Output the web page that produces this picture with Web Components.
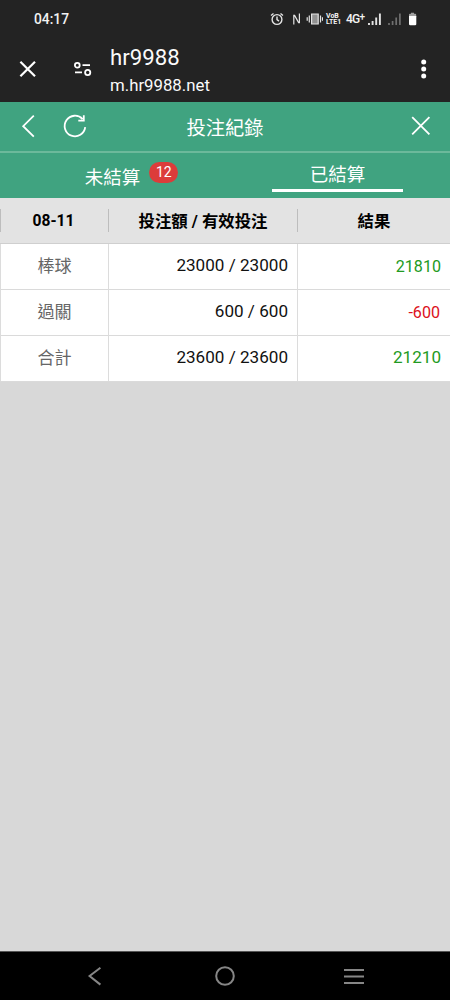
<!DOCTYPE html>
<html lang="zh-Hant">
<head>
<meta charset="utf-8">
<meta name="viewport" content="width=device-width, initial-scale=1">
<title>投注紀錄</title>
<style>
  body {
    margin: 0;
    font-family: Roboto, "Noto Sans CJK TC", sans-serif;
  }
</style>
</head>
<body>
<phone-screen>
  <status-bar slot="top" time="04:17"></status-bar>
  <browser-bar slot="top" name="hr9988" url="m.hr9988.net"></browser-bar>
  <app-header>投注紀錄</app-header>
  <tab-bar>
    <tab-item count="12">未結算</tab-item>
    <tab-item active>已結算</tab-item>
  </tab-bar>
  <bet-table>
    <bet-row head><span>08-11</span><span slot="amount">投注額 / 有效投注</span><span slot="result">結果</span></bet-row>
    <bet-row result="21810"><span>棒球</span><span slot="amount">23000 / 23000</span></bet-row>
    <bet-row result="-600"><span>過關</span><span slot="amount">600 / 600</span></bet-row>
    <bet-row result="21210" total><span>合計</span><span slot="amount">23600 / 23600</span></bet-row>
  </bet-table>
  <nav-bar slot="bottom"></nav-bar>
</phone-screen>

<script>
// shared base: clones the class's template into an open shadow root
class BaseElement extends HTMLElement {
  constructor() {
    super()
    this.attachShadow({ mode: 'open' })
    const template = document.createElement('template')
    template.innerHTML = this.constructor.markup
    this.shadowRoot.appendChild(template.content.cloneNode(true))
  }

  element(id) { return this.shadowRoot.getElementById(id) }
}

class PhoneScreen extends BaseElement {
  static markup = `
    <style>
      :host {
        display: flex;
        flex-direction: column;
        height: 1000px;
        overflow: hidden;
        background: #d8d8d8;
      }
      main { flex: 1; }
    </style>
    <slot name="top"></slot>
    <main><slot></slot></main>
    <slot name="bottom"></slot>
  `
}

class StatusBar extends BaseElement {
  static markup = `
    <style>
      :host {
        display: flex;
        justify-content: space-between;
        align-items: center;
        box-sizing: border-box;
        height: 37px;
        padding: 0 33px 0 34px;
        background: #232323;
        color: #f2f2f2;
      }
      #time { font-size: 13.8px; font-weight: 500; line-height: 18px; padding-top: 1px; }
      #icons { display: flex; align-items: center; }
      svg { display: block; fill: none; stroke: #e4e4e4; }
      .volte {
        display: grid;
        font-size: 7px;
        line-height: 6px;
        font-weight: 700;
        width: 16px;
        margin: 0 4px 0 3px;
        white-space: nowrap;
      }
      .net { font-size: 12px; font-weight: 500; width: 22px; line-height: 14px; white-space: nowrap; display: flex; letter-spacing: -.7px; }
      .net sup { font-size: 10px; line-height: 10px; vertical-align: top; }
    </style>
    <span id="time"></span>
    <div id="icons">
      <svg width="14" height="14" viewBox="0 0 14 14" stroke-width="1.4"><circle cx="7" cy="7.5" r="4.9"/><path d="M7 4.6v3l2 1.5M1 3.5l2.5-2M13 3.5l-2.5-2"/></svg>
      <svg width="22" height="14" viewBox="0 0 22 14" stroke-width="1.2"><path d="M9.8 12.6V3.4h.8l4 7.2h.8V1.6"/></svg>
      <svg width="17" height="14" viewBox="0 0 17 14" stroke-width="1.2"><path fill="#929292" d="M5.6 2h6.6v10H5.6z"/><path d="M3.3 3.6v6.8M1.2 5.3v3.4M14.5 3.6v6.8M16.5 5.3v3.4"/></svg>
      <div class="volte"><span>VoB</span><span>LTE1</span></div>
      <div class="net"><span>4G</span><sup>+</sup></div>
      <svg width="14" height="14" viewBox="0 0 14 14" stroke="#fff" stroke-width="1.9"><path d="M1 11v2M4.6 9v4M8.2 5.5V13M11.9 1.5V13"/></svg>
      <svg width="20" height="14" viewBox="0 0 20 14" style="stroke:#707070" stroke-width="1.7"><path d="M7 11v2M10.6 9v4M14.2 5.5V13M17.9 1.5V13"/></svg>
      <svg width="15" height="14" viewBox="0 0 15 14" style="stroke:none"><path fill="#a0a0a0" d="M9 .7h3v1.1h1.2q1 0 1 1V5H7V2.8q0-1 1-1h1z"/><path fill="#fff" d="M7 4h7.3v8q0 1.2-1.2 1.2H8.2Q7 13.2 7 12z"/></svg>
    </div>
  `

  connectedCallback() {
    this.element('time').textContent = this.getAttribute('time')
  }
}

class BrowserBar extends BaseElement {
  static markup = `
    <style>
      :host {
        display: flex;
        align-items: center;
        box-sizing: border-box;
        height: 65px;
        padding: 0 20px 0 18px;
        background: #232323;
        color: #fafafa;
      }
      svg { display: block; fill: none; stroke: #fff; margin-bottom: 2px; }
      .site { margin: 0 16px 2px 36px; }
      .title { flex: 1; display: flex; flex-direction: column; }
      #name { font-size: 22.2px; line-height: 27px; }
      #url { font-size: 16.8px; line-height: 22px; padding-top: 3px; }
    </style>
    <svg width="20" height="20" viewBox="0 0 20 20" stroke-width="2.2"><path d="m2.4 2.7 14.6 14.6m0-14.6L2.4 17.3"/></svg>
    <svg class="site" width="20" height="20" viewBox="0 0 20 20" stroke-width="1.8"><circle cx="3.3" cy="6.2" r="2.4"/><path d="M8.5 6.2H16M1 13.3h7"/><circle cx="13.7" cy="13.5" r="2.6"/></svg>
    <div class="title"><span id="name"></span><span id="url"></span></div>
    <svg width="13" height="22" viewBox="0 0 13 22" style="fill:#fff;stroke:none"><circle cx="6.7" cy="4" r="2.5"/><circle cx="6.7" cy="11" r="2.5"/><circle cx="6.7" cy="18" r="2.5"/></svg>
  `

  connectedCallback() {
    this.element('name').textContent = this.getAttribute('name')
    this.element('url').textContent = this.getAttribute('url')
  }
}

class AppHeader extends BaseElement {
  static markup = `
    <style>
      :host {
        display: grid;
        grid-template-columns: 100px 1fr 100px;
        align-items: center;
        box-sizing: border-box;
        height: 51px;
        border-bottom: 2px solid #6cb99b;
        background: #40a380;
        color: #fff;
      }
      svg { display: block; fill: none; stroke: #fff; stroke-width: 1.8; }
      .left { display: flex; padding: 0 0 1px 20px; gap: 20px; }
      .right { display: flex; justify-content: flex-end; padding: 0 19px 1px 0; }
      .title { text-align: center; font-size: 19.3px; line-height: 26px; padding-top: 4px; }
    </style>
    <div class="left">
      <svg width="20" height="26" viewBox="0 0 20 26"><path d="M13.8 2.7 3.2 13.2l10.6 10.5"/></svg>
      <svg width="28" height="26" viewBox="0 0 28 26"><path d="M25.2 14.2A10.3 10.3 0 1 1 22.6 6.1M18.3 7.7h5.5V2.2"/></svg>
    </div>
    <div class="title"><slot></slot></div>
    <div class="right">
      <svg width="20" height="20" viewBox="0 0 20 20"><path d="m1.2 1.2 17.2 17.2m0-17.2L1.2 18.4"/></svg>
    </div>
  `
}

class TabBar extends BaseElement {
  static markup = `
    <style>
      :host {
        display: grid;
        grid-template-columns: 1fr 1fr;
        height: 45px;
        background: #40a380;
        color: #fff;
      }
    </style>
    <slot></slot>
  `
}

class TabItem extends BaseElement {
  static markup = `
    <style>
      :host {
        display: flex;
        justify-content: center;
        align-items: flex-start;
        font-size: 18.5px;
        line-height: 26px;
      }
      .label {
        box-sizing: border-box;
        height: 39px;
        padding-top: 12px;
      }
      :host([active]) .label {
        width: 131px;
        padding-top: 9px;
        text-align: center;
        border-bottom: 3px solid #fff;
      }
      :host(:not([active])) { padding-left: 38px; }
      #badge {
        margin: 9px 0 0 9px;
        width: 29px;
        height: 21px;
        border-radius: 11px;
        background: #dc3c3a;
        font-size: 14px;
        line-height: 21px;
        text-align: center;
      }
      #badge[hidden] { display: none; }
    </style>
    <span class="label"><slot></slot></span>
    <span id="badge" hidden></span>
  `

  connectedCallback() {
    const badge = this.element('badge')
    badge.textContent = this.getAttribute('count')
    badge.hidden = !this.hasAttribute('count')
  }
}

class BetTable extends BaseElement {
  static markup = `
    <style>
      :host { display: block; background: #fff; }
    </style>
    <slot></slot>
  `
}

class BetRow extends BaseElement {
  static markup = `
    <style>
      :host {
        display: grid;
        grid-template-columns: 108px 189px 1fr;
        box-sizing: border-box;
        height: 46px;
        border-bottom: 1px solid #dadada;
        font-size: 17.1px;
        line-height: 43px;
        color: #111;
      }
      div {
        border-left: 1px solid #dcdcdc;
        text-align: right;
        padding-right: 9px;
        white-space: nowrap;
      }
      .name { text-align: center; padding: 0; line-height: 44px; color: #666; }
      #result { font-size: 16.1px; line-height: 46px; color: #229a22; }
      #result.minus { color: #dc1020; padding-right: 10px; }
      :host([total]) #result { font-size: 17.1px; line-height: 43px; }

      /* heading row: short separators instead of full-height borders */
      :host([head]) {
        background: #e3e3e3;
        border-bottom-color: #cfcfcf;
        color: #000;
        font-weight: 700;
        align-items: center;
      }
      :host([head]) div, :host([head]) #result {
        border-color: #bdbdbd;
        text-align: center;
        padding: 0;
        font-size: 16.4px;
        line-height: 25px;
        height: 23px;
        color: #000;
      }
      :host([head]) .name { font-size: 15.6px; line-height: 24px; padding-right: 2px; }
    </style>
    <div class="name"><slot></slot></div>
    <div><slot name="amount"></slot></div>
    <div id="result"><slot name="result"></slot></div>
  `

  connectedCallback() {
    const value = this.getAttribute('result')
    if (value === null) return
    const result = this.element('result')
    result.textContent = value
    result.classList.toggle('minus', Number(value) < 0)
  }
}

class NavBar extends BaseElement {
  static markup = `
    <style>
      :host {
        display: flex;
        justify-content: space-between;
        align-items: center;
        box-sizing: border-box;
        height: 49px;
        padding: 0 85px;
        border-top: 1px solid #555;
        background: #000;
      }
      svg { display: block; fill: none; stroke: #868686; stroke-width: 2; }
    </style>
    <svg width="22" height="22" viewBox="0 0 22 22"><path d="M15.4 2.8 4.6 11l10.8 8.6"/></svg>
    <svg width="22" height="22" viewBox="0 0 22 22"><circle cx="11" cy="11" r="8.8"/></svg>
    <svg width="22" height="22" viewBox="0 0 22 22"><path d="M1 4.9h20M1 11.4h20M1 17.9h20"/></svg>
  `
}

customElements.define('phone-screen', PhoneScreen)
customElements.define('status-bar', StatusBar)
customElements.define('browser-bar', BrowserBar)
customElements.define('app-header', AppHeader)
customElements.define('tab-bar', TabBar)
customElements.define('tab-item', TabItem)
customElements.define('bet-table', BetTable)
customElements.define('bet-row', BetRow)
customElements.define('nav-bar', NavBar)
</script>
</body>
</html>
